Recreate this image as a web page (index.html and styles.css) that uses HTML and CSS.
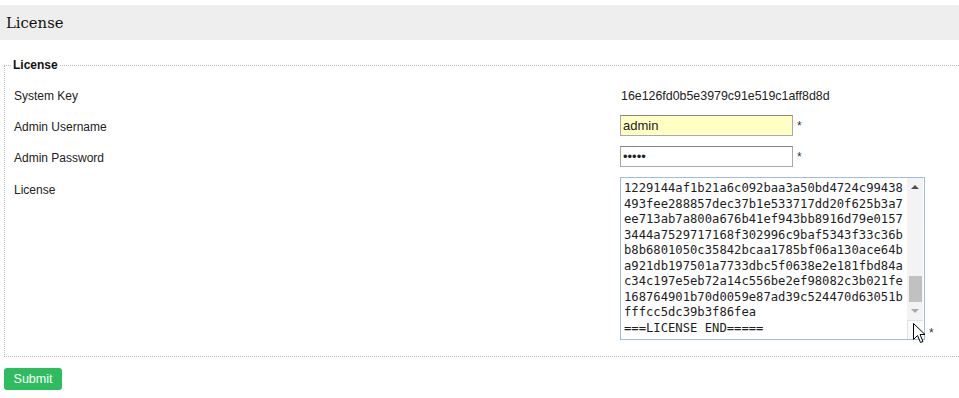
FILE: index.html
```html
<!DOCTYPE html>
<html lang="en">
<head>
    <meta charset="UTF-8">
    <meta name="viewport" content="width=device-width, initial-scale=1.0">
    <title>License</title>
    <link rel="stylesheet" href="styles.css">
</head>
<body>

    <div class="page-header">License</div>

    <form class="license-form">
        <fieldset class="license-set">
            <legend>License</legend>

            <div class="form-grid">
                <span class="form-label">System Key</span>
                <span class="form-value">16e126fd0b5e3979c91e519c1aff8d8d</span>

                <label class="form-label" for="username">Admin Username</label>
                <div class="form-field">
                    <input type="text" id="username" class="text-input filled" value="admin">
                    <span class="required">*</span>
                </div>

                <label class="form-label" for="password">Admin Password</label>
                <div class="form-field">
                    <input type="password" id="password" class="text-input" value="admin">
                    <span class="required">*</span>
                </div>

                <span class="form-label top">License</span>
                <div class="form-field bottom">
                    <div class="license-box">
<div class="license-text">1229144af1b21a6c092baa3a50bd4724c99438
493fee288857dec37b1e533717dd20f625b3a7
ee713ab7a800a676b41ef943bb8916d79e0157
3444a7529717168f302996c9baf5343f33c36b
b8b6801050c35842bcaa1785bf06a130ace64b
a921db197501a7733dbc5f0638e2e181fbd84a
c34c197e5eb72a14c556be2ef98082c3b021fe
168764901b70d0059e87ad39c524470d63051b
fffcc5dc39b3f86fea
===LICENSE END=====</div>
                        <div class="scrollbar">
                            <span class="scroll-btn"><span class="tri-up"></span></span>
                            <span class="scroll-track"><span class="scroll-thumb"></span></span>
                            <span class="scroll-btn"><span class="tri-down"></span></span>
                            <span class="resizer"></span>
                        </div>
                        <!-- mouse pointer resting on the resize corner -->
                        <svg class="pointer" width="14" height="21" viewBox="0 0 14 21">
                            <path d="M0.5 0.5 L0.5 16.5 L4.5 12.5 L7.5 19.5 L10 18.5 L7 11.5 L12 11.5 Z" fill="#fff" stroke="#000" stroke-width="1" stroke-linejoin="round"/>
                        </svg>
                    </div>
                    <span class="required">*</span>
                </div>
            </div>
        </fieldset>

        <button type="button" class="submit-btn">Submit</button>
    </form>

</body>
</html>
```

FILE: styles.css
```css
body {
    font-family: 'Liberation Sans', Arial, sans-serif;
    font-size: 12px;
    background-color: #fff;
    color: #222;
    margin: 0;
    padding: 0;
    overflow: hidden;
}

.page-header {
    margin-top: 5px;
    height: 35px;
    line-height: 35px;
    padding-left: 6px;
    background-color: #eee;
    font-family: 'DejaVu Serif', 'Liberation Serif', serif;
    font-size: 14.8px;
    color: #111;
}

.license-form {
    margin: 0;
    padding: 0;
}

.license-set {
    margin: 18px -10px 0 4px;
    padding: 0 0 16px 6px;
    border: 1px dotted #bbb;
    min-width: 0;
}

.license-set legend {
    padding: 0 2px;
    font-weight: bold;
    font-size: 12px;
    line-height: 14px;
    color: #111;
}

.form-grid {
    display: grid;
    grid-template-columns: 606px 1fr;
    row-gap: 10px;
    align-items: center;
    margin: 12px 0 0 3px;
}

.form-label {
    padding-top: 3px;
    line-height: 18px;
    color: #222;
}

.form-label.top {
    align-self: start;
    padding-top: 6px;
    line-height: 15px;
}

.form-value {
    padding: 3px 0 0 1px;
    line-height: 18px;
    color: #222;
    font-size: 12.4px;
}

.form-field {
    display: flex;
    align-items: center;
}

.form-field.bottom {
    align-items: flex-end;
}

.required {
    margin-left: 4px;
    line-height: 14px;
    color: #333;
}

.text-input {
    width: 173px;
    height: 21px;
    box-sizing: border-box;
    margin: 0;
    padding: 0 2px;
    border: 1px solid #a9a9a9;
    border-top-color: #858585;
    border-radius: 0;
    font-family: 'Liberation Sans', Arial, sans-serif;
    font-size: 13px;
    color: #222;
    background-color: #fff;
    outline: none;
}

.text-input.filled {
    background-color: #ffffc4;
}

.license-box {
    position: relative;
    display: flex;
    width: 305px;
    height: 163px;
    box-sizing: border-box;
    border: 1px solid #9fbbe0;
    background-color: #fff;
}

.license-text {
    flex: 1;
    padding: 3px 0 0 3px;
    overflow: hidden;
    white-space: pre;
    font-family: 'DejaVu Sans Mono', 'Liberation Mono', monospace;
    font-size: 12.2px;
    line-height: 15.5px;
    color: #1e1e1e;
}

.scrollbar {
    display: flex;
    flex-direction: column;
    width: 16px;
    margin-right: 1px;
    background-color: #f3f3f3;
}

.scroll-btn {
    display: flex;
    align-items: center;
    justify-content: center;
    height: 17px;
}

.scroll-btn:nth-child(3) {
    height: 18px;
}

.tri-up {
    border-left: 4px solid transparent;
    border-right: 4px solid transparent;
    border-bottom: 4px solid #505050;
}

.tri-down {
    border-left: 4px solid transparent;
    border-right: 4px solid transparent;
    border-top: 4px solid #a8a8a8;
}

.scroll-track {
    flex: 1;
    display: flex;
    flex-direction: column;
    justify-content: flex-end;
    padding: 0 1px 0 2px;
}

.scroll-thumb {
    height: 26px;
    background-color: #c1c1c1;
}

.resizer {
    height: 19px;
    background-color: #fafafa;
    border-top: 1px solid #e2e2e2;
    border-left: 1px solid #e2e2e2;
    box-sizing: border-box;
}

.pointer {
    position: absolute;
    left: 292px;
    top: 145px;
}

.submit-btn {
    display: block;
    margin: 11px 0 0 4px;
    width: 58px;
    height: 22px;
    padding: 0;
    border: none;
    border-radius: 3px;
    background-color: #2dbd5e;
    color: #fff;
    font-family: 'Liberation Sans', Arial, sans-serif;
    font-size: 12.5px;
    cursor: pointer;
}

.submit-btn:hover {
    background-color: #27a853;
}
```
